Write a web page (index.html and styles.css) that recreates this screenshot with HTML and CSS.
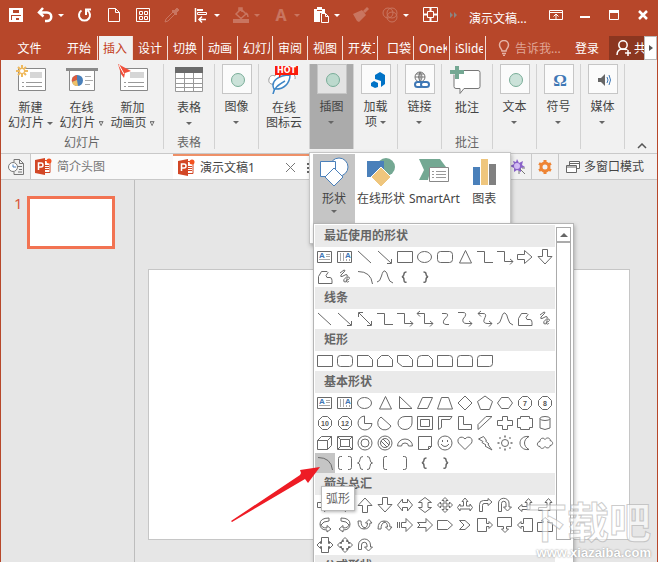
FILE: index.html
```
<!DOCTYPE html>
<html lang="zh-CN">
<head>
  <meta charset="UTF-8">
  <meta name="viewport" content="width=device-width, initial-scale=1.0">
  <title>演示文稿1</title>
  <link rel="stylesheet" href="styles.css">
</head>
<body>
  <div class="window">
    <header class="titlebar">
      <div class="quick">
        <button aria-label="保存"><svg width="20" height="20"><path d="M4 4h12v12H4zM6 4v5h8V4M7 16v-4h7v4" fill="none" stroke="#fff" stroke-width="2"/><path d="M8 13h2v3H8z" fill="#fff"/></svg></button>
        <div class="split">
          <button aria-label="撤消"><svg width="20" height="20"><path d="M8 3L4 7.500l4.500 4M4.500 7.500H12a4 4 0 0 1 0 8.500h-2" fill="none" stroke="#fff" stroke-width="2.500"/></svg></button>
          <button class="drop" aria-label="撤消选项"></button>
        </div>
        <button aria-label="重复"><svg width="20" height="20"><path d="M6.500 5.500A5.500 5.500 0 1 0 12.500 5.500M16 4.500h-5V10" fill="none" stroke="#fff" stroke-width="2"/></svg></button>
        <button aria-label="新建"><svg width="20" height="20"><path d="M4.500 3.500h7l4 4v9h-11zM11.500 3.500v4h4" fill="none" stroke="#fff"/></svg></button>
        <button aria-label="网格"><svg width="20" height="20"><path d="M3.500 3.500h13v13h-13zM6.500 6.500h3v3h-3zM11.500 6.500h3v3h-3zM6.500 11.500h3v3h-3zM11.500 11.500h3v3h-3z" fill="none" stroke="#fff"/></svg></button>
        <button class="off" aria-label="取色器"><svg width="20" height="20"><path d="M3 17l1-3 7-7 2 2-7 7z" fill="none" stroke="#fff"/><path d="M10 6l1-1 1 1 3-3 2 2-3 3 1 1-1 1z" fill="#fff" stroke="#fff"/></svg></button>
        <div class="split">
          <button aria-label="对齐"><svg width="20" height="20"><path d="M4.500 3v14M8 14.500h7M11 11.500l-3 3 3 3" fill="none" stroke="#fff" stroke-width="1.500"/><path d="M6 4h6v2H6z" fill="#fff"/><path d="M6.500 7.500h9v2h-9z" fill="none" stroke="#fff"/></svg></button>
          <button class="drop" aria-label="对齐选项"></button>
        </div>
        <div class="split off">
          <button aria-label="填充"><svg width="20" height="20"><path d="M5 9l5-5 5 5-5 4.500zM8 6V3h3v4M15 8q2 1 2 4" fill="none" stroke="#fff" stroke-width="1.500"/><path d="M2 14h16v4H2z" fill="#fff"/></svg></button>
          <button class="drop" aria-label="填充选项"></button>
        </div>
        <div class="split off">
          <button class="letter">A</button>
          <button class="drop" aria-label="字体颜色选项"></button>
        </div>
        <div class="split">
          <button aria-label="粘贴"><svg width="20" height="20"><path d="M3 4h3V2h5v2h3v4H9v9H3z" fill="#fff"/><path d="M10.500 8.500h4l3 3v6h-7zM14.500 8.500v3h3" fill="#b7472a" stroke="#fff"/><path d="M6 5.500h5" stroke="#b7472a"/></svg></button>
          <button class="drop" aria-label="粘贴选项"></button>
        </div>
        <button class="off" aria-label="格式刷"><svg width="20" height="20"><path d="M2 9l4 7 2 1 7-7-4-5zM12 6l4-4 2 2-4 4z" fill="#fff"/></svg></button>
        <div class="split">
          <button class="off" aria-label="合并形状"><svg width="20" height="20"><g fill="none" stroke="#fff"><circle cx="8" cy="8" r="5"/><circle cx="12" cy="12" r="5"/><circle cx="12" cy="8" r="5"/></g></svg></button>
          <button class="drop" aria-label="合并形状选项"></button>
        </div>
        <button aria-label="适应窗口"><svg width="20" height="20"><path d="M3.500 2.500h14v14h-14zM7.500 6.500h6v6h-6z" fill="none" stroke="#fff"/><path d="M10.500 3v3M10.500 13v3M4 9.500h3M14 9.500h3" stroke="#fff" stroke-width="2"/></svg></button>
        <button class="more" aria-label="更多"><svg width="10" height="20"><path d="M1 7l3 3-3 3zM5 7l3 3-3 3z" fill="#8b8582"/></svg></button>
      </div>
      <div class="doc-title">演示文稿...</div>
      <div class="controls">
        <button aria-label="功能区显示选项"><svg width="14" height="12"><path d="M.5 1.500h13v9H.5zM1 3.500h12M7 10V5M4.500 7.500L7 5l2.500 2.500" fill="none" stroke="#fff"/></svg></button>
        <button aria-label="最小化"><svg width="10" height="10"><path d="M0 6h10v2H0z" fill="#fff"/></svg></button>
        <button aria-label="最大化"><svg width="10" height="10"><path d="M.5.5h9v9h-9z" fill="none" stroke="#fff"/><path d="M0 0h10v3H0z" fill="#fff"/></svg></button>
        <button aria-label="关闭"><svg width="10" height="10"><path d="M1 1l8 8M9 1L1 9" stroke="#fff" stroke-width="2.500"/></svg></button>
      </div>
    </header>

    <nav class="tabs">
      <button class="file">文件</button>
      <button class="tab home">开始</button>
      <button class="tab active">插入</button>
      <button class="tab">设计</button>
      <button class="tab">切换</button>
      <button class="tab">动画</button>
      <button class="tab"><span>幻灯片</span></button>
      <button class="tab">审阅</button>
      <button class="tab">视图</button>
      <button class="tab"><span>开发工具</span></button>
      <button class="tab addin center">口袋</button>
      <button class="tab addin"><span>OneKey</span></button>
      <button class="tab addin"><span>iSlide</span></button>
      <label class="tellme">
        <svg width="12" height="16"><path d="M4 11C4 9 1.500 8 1.500 5a4.500 4.500 0 0 1 9 0C10.500 8 8 9 8 11zM4 13.500h4M5 15.500h2" fill="none" stroke="#e5b3a6" stroke-width="1.500"/></svg>
        <input type="text" placeholder="告诉我..." aria-label="告诉我">
      </label>
      <button class="login">登录</button>
      <button class="share"><svg width="17" height="18"><path d="M2 16c0-4 2-6 6-6s4 1 4 1M13 11v6M10 14h6" fill="none" stroke="#fff" stroke-width="1.500"/><circle cx="8" cy="6" r="4.200" fill="none" stroke="#fff" stroke-width="1.500"/></svg>共享</button>
      <button class="tab-scroll" aria-label="向右滚动"><svg width="4" height="6"><path d="M0 0l4 3-4 3z" fill="#555"/></svg></button>
    </nav>

    <section class="ribbon">
      <div class="group">
        <div class="items">
          <button class="big">
            <svg width="34" height="30"><path d="M4.500 4.500h27v22h-27z" fill="#fff" stroke="#888"/><path d="M16 8h12v6H16z" fill="#d6d6d6"/><path d="M8 18.500h2m2 0h16M8 22.500h2m2 0h16" stroke="#999"/><path d="M8 1v12M2 7h12M4 3l8 8M12 3l-8 8" stroke="#efb95c" stroke-width="2"/><circle cx="8" cy="7" r="2" fill="#fff"/></svg>
            <span>新建<br>幻灯片 <i class="caret"></i></span>
          </button>
          <button class="big">
            <svg width="34" height="30"><path d="M4.500 5.500h25v21h-25z" fill="#fff" stroke="#888"/><path d="M1 4h32v3H1z" fill="#8a8a8a"/><circle cx="12.500" cy="16.500" r="5.500" fill="#4a80ba"/><path d="M12 16V11a5.500 5.500 0 0 0-5 7z" fill="#dc5b3c"/><path d="M12 16l-5 2a5.500 5.500 0 0 0 6 4z" fill="#efc067"/><path d="M20 12.500h6M20 16.500h8M20 20.500h5" stroke="#aaa"/></svg>
            <span>在线<br>幻灯片 <i class="caret hollow"></i></span>
          </button>
          <button class="big">
            <svg width="34" height="30"><path d="M4.500 4.500h27v22h-27z" fill="#fff" stroke="#888"/><path d="M14 8h14v6H14z" fill="#d6d6d6"/><path d="M8 18.500h2m2 0h16M8 22.500h2m2 0h16" stroke="#999"/><path d="M2 0l13 7-6 2-1 5-3-4z" fill="#f2503b"/><path d="M3 1l5 9" stroke="#fff"/></svg>
            <span>新加<br>动画页 <i class="caret hollow"></i></span>
          </button>
        </div>
        <div class="group-name">幻灯片</div>
      </div>
      <div class="group wide">
        <button class="big">
          <svg width="30" height="30"><path d="M1.500 5.500h27v22h-27zM10.500 9v19M19.500 9v19M2 14.500h26M2 19.500h26M2 23.500h26" fill="#fff" stroke="#999"/><path d="M1 3h28v6H1z" fill="#6a6a6a"/></svg>
          <span>表格<br><i class="caret"></i></span>
        </button>
        <div class="group-name">表格</div>
      </div>
      <div class="group">
        <button class="small">
          <svg class="box" width="30" height="30"><circle cx="15" cy="15" r="6.500" fill="#cbe2d9" stroke="#79ad98"/></svg>
          <span>图像<br><i class="caret"></i></span>
        </button>
      </div>
      <div class="group wide">
        <button class="big">
          <svg width="34" height="30"><path d="M8 20c-4 1-7-1-6-5s4-4 6-3c1-5 9-6 12-2 5-3 9 1 8 5" fill="#fff" stroke="#999"/><path d="M6 30c1-6 5-9 12-13M7 25C3 17 12 11 23 11c0 8-6 15-16 14z" fill="#fff" stroke="#3e86c6" stroke-width="1.500"/><path d="M8 2h23v9H14l-2 3v-3H8z" fill="#fa1c0c"/><text x="19.500" y="9" text-anchor="middle" class="hot">HOT</text></svg>
          <span>在线<br>图标云</span>
        </button>
      </div>
      <div class="group pressed">
        <button class="small">
          <svg class="box" width="30" height="30"><circle cx="15" cy="15" r="6.500" fill="#bcd9cd" stroke="#79ad98"/></svg>
          <span>插图<br><i class="caret"></i></span>
        </button>
      </div>
      <div class="group">
        <button class="small">
          <svg class="box" width="30" height="30"><path d="M13 10l5-3 5 3v9l-4 3v-6l-6-2z" fill="#0072c6"/><path d="M9 18l3-2 4 2v4l-3 1-4-2z" fill="#0072c6"/></svg>
          <span>加载<br>项 <i class="caret"></i></span>
        </button>
      </div>
      <div class="group">
        <button class="small">
          <svg class="box" width="30" height="30"><g fill="none" stroke="#777"><circle cx="14" cy="12" r="5"/><path d="M9 12h10M14 7v10M10 9h8M14 7q-3 5 0 10M14 7q4 5 0 10"/></g><g fill="#fff" stroke="#3e77b5" stroke-width="2"><rect x="9" y="17" width="8" height="5" rx="2.500"/><rect x="15" y="17" width="8" height="5" rx="2.500"/></g></svg>
          <span>链接<br><i class="caret"></i></span>
        </button>
      </div>
      <div class="group wide">
        <button class="big">
          <svg width="34" height="30"><path d="M7 6.500h21q2 0 2 2v14q0 2-2 2H14l-4 5v-5H6q-2 0-2-2v-12" fill="#fff" stroke="#777"/><path d="M5 2h4v4h5v4H9v5H5v-5H0V6h5z" fill="#74a893"/></svg>
          <span>批注</span>
        </button>
        <div class="group-name">批注</div>
      </div>
      <div class="group">
        <button class="small">
          <svg class="box" width="30" height="30"><circle cx="15" cy="15" r="6.500" fill="#cbe2d9" stroke="#79ad98"/></svg>
          <span>文本<br><i class="caret"></i></span>
        </button>
      </div>
      <div class="group">
        <button class="small">
          <svg class="box" width="30" height="30"><text x="15" y="21" text-anchor="middle" class="omega">Ω</text></svg>
          <span>符号<br><i class="caret"></i></span>
        </button>
      </div>
      <div class="group">
        <button class="small">
          <svg class="box" width="30" height="30"><path d="M9 13h3l4-4v12l-4-4H9z" fill="#666"/><path d="M18 12q2 3 0 6M20 10q3 5 0 10" fill="none" stroke="#3e77b5"/></svg>
          <span>媒体<br><i class="caret"></i></span>
        </button>
      </div>
      <button class="collapse" aria-label="折叠功能区"><svg width="10" height="6"><path d="M1 5l4-4 4 4" fill="none" stroke="#555" stroke-width="1.500"/></svg></button>
    </section>

    <div class="doc-tabs">
      <button class="history" aria-label="历史"><svg width="16" height="16"><path d="M6 3V.5h5.500l4 4v11H6V13M11.500.5v4h4M10 7.500h4M11 10.500h3M10 13h4" fill="none" stroke="#777"/><circle cx="5" cy="8" r="4.500" fill="#fff" stroke="#777"/><path d="M5 5.500V8h3" fill="none" stroke="#4a7ebb"/></svg></button>
      <button class="doc">
        <svg width="17" height="17"><path d="M9 2.500h6v12H9M10 7.500h4M10 9.500h4M10 11.500h4" fill="#fff" stroke="#d24726"/><path d="M0 2l10-2v17L0 15z" fill="#d24726"/><path d="M3.500 12V5H6q2 0 2 2T6 9H4" fill="none" stroke="#fff" stroke-width="1.500"/><circle cx="14" cy="3" r="2.500" fill="#f4511e"/></svg>
        简介头图
      </button>
      <div class="doc current">
        <svg width="17" height="17"><path d="M9 2.500h6v12H9M10 7.500h4M10 9.500h4M10 11.500h4" fill="#fff" stroke="#d24726"/><path d="M0 2l10-2v17L0 15z" fill="#d24726"/><path d="M3.500 12V5H6q2 0 2 2T6 9H4" fill="none" stroke="#fff" stroke-width="1.500"/><circle cx="14" cy="3" r="2.500" fill="#f4511e"/></svg>
        演示文稿1
        <button class="close" aria-label="关闭标签"><svg width="11" height="11"><path d="M1 1l9 9M10 1l-9 9" stroke="#777"/></svg></button>
        <button aria-label="标签菜单"><svg width="3" height="11"><path d="M0 1h2v2H0zM0 5h2v2H0zM0 9h2v2H0z" fill="#666"/></svg></button>
      </div>
      <button class="tool magic" aria-label="美化"><svg width="16" height="16"><path d="M7 0l2 4 4-2-1 4 3 2-4 1v4l-4-2-3 2V9L0 7l4-2-1-3 3 1z" fill="#8a63c9"/><circle cx="7" cy="7" r="3" fill="#d3bcf5"/><path d="M10 10l5 5M9 12v3M12 9h3" stroke="#777"/></svg></button>
      <button class="tool" aria-label="设置"><svg width="14" height="14"><circle cx="7" cy="7" r="4" fill="none" stroke="#ee8434" stroke-width="3"/><path d="M7 0v2M7 12v2M1 3.500l2 1M11 9.500l2 1M13 3.500l-2 1M3 9.500l-2 1" stroke="#ee8434" stroke-width="3"/></svg></button>
      <button class="mode"><svg width="14" height="12"><path d="M3.500.5h10v7h-10zM3 2.500h11" fill="#fff" stroke="#666"/><path d="M.5 4.500h10v7H.5zM1 6h9" fill="#fff" stroke="#666"/></svg>多窗口模式</button>
    </div>

    <main class="work">
      <aside class="thumbs">
        <span class="num">1</span>
        <button class="thumb" aria-label="幻灯片 1"></button>
      </aside>
      <div class="stage">
        <div class="slide"></div>
      </div>
    </main>

    <div class="flyout">
      <button class="picked">
        <svg width="30" height="30"><circle cx="20" cy="10" r="9" fill="#fff" stroke="#4a80ba"/><path d="M1.500 4.500h15v15h-15z" fill="#fff" stroke="#4a80ba"/><path d="M15 11l9 9-9 9-9-9z" fill="#fff" stroke="#4a80ba"/></svg>
        形状<i class="caret"></i>
      </button>
      <button>
        <svg width="30" height="30"><circle cx="20" cy="10" r="9" fill="#74a893"/><path d="M1 4h17v16H1z" fill="#4a80ba"/><path d="M15 10l10 10-10 10L5 20z" fill="#efc67d" stroke="#fff"/></svg>
        在线形状
      </button>
      <button>
        <svg width="32" height="30"><path d="M1 2h21l6 8-3 5H12l-2 8H1l5-10z" fill="#74a893"/><path d="M11.500 10.500h19v14h-19z" fill="#fff" stroke="#888"/><path d="M14 14.500h2m2 0h10M14 17.500h2m2 0h10M14 20.500h2m2 0h10" stroke="#999"/></svg>
        SmartArt
      </button>
      <button>
        <svg width="26" height="30"><path d="M2 10h7v18H2z" fill="#4a80ba"/><path d="M10 2h7v26h-7z" fill="#efc67d"/><path d="M18 7h7v21h-7z" fill="#808080"/></svg>
        图表
      </button>
    </div>

    <div class="gallery">
      <div class="shapes" id="shapes"></div>
      <div class="scroll">
        <button aria-label="向上滚动"><svg width="8" height="4"><path d="M0 4l4-4 4 4z" fill="#666"/></svg></button>
        <div class="grip"></div>
      </div>
    </div>

    <div class="tooltip">弧形</div>
    <svg class="pointer" width="92" height="58"><path d="M0 55L69 9 70 7 69 4 89 1 77 17 74 13 1 56z" fill="#ee1c25"/></svg>
    <div class="watermark"><b>下载吧</b><span>www.xiazaiba.com</span></div>
  </div>
  <script src="shapes.js"></script>
</body>
</html>
```
FILE: styles.css
```
*, *::before {
  box-sizing: border-box;
}
body {
  margin: 0;
  font-family: "Noto Sans", "Noto Sans CJK SC", sans-serif;
  font-size: 12px;
  line-height: 15px;
  color: #444;
}
button, input {
  font: inherit;
  color: inherit;
  background: none;
  border: none;
  padding: 0;
  margin: 0;
}
svg {
  display: block;
  flex: none;
}
.window {
  position: relative;
  display: flex;
  flex-direction: column;
  height: 100vh;
  overflow: hidden;
  border: solid #b7472a;
  border-width: 0 1px;
  background: #f1f1f1;
}

/* title bar */
.titlebar {
  display: flex;
  height: 36px;
  padding: 5px 0 0 5px;
  background: #b7472a;
  color: #fff;
}
.quick {
  display: flex;
  gap: 9px;
  height: 20px;
}
.split {
  display: flex;
}
.drop {
  width: 11px;
}
.drop::before {
  content: "";
  display: block;
  margin: 0 auto;
  width: 6px;
  border: 3px solid transparent;
  border-top-color: #fff;
  border-bottom: none;
}
.off {
  opacity: 0.25;
}
.letter {
  width: 20px;
  font-size: 16px;
  font-weight: bold;
}
.doc-title {
  margin: 6px 0 0 10px;
  white-space: nowrap;
}
.controls {
  display: flex;
  margin-left: auto;
  height: 20px;
}
.controls button {
  display: flex;
  align-items: center;
  justify-content: center;
  width: 29px;
}

/* ribbon tabs */
.tabs {
  display: flex;
  height: 24px;
  background: #b7472a;
  color: #fff;
}
.file {
  width: 61px;
  padding-right: 4px;
}
.tab {
  flex: none;
  width: 35px;
  padding: 0 2px 0 5px;
  border-right: 1px solid #f3dcd6;
  text-align: left;
  white-space: nowrap;
}
.tab span {
  display: block;
  overflow: hidden;
}
.home {
  width: 36px;
}
.active {
  padding-left: 4px;
  background: #f1f1f1;
  color: #c43e1c;
  border-left: 1px solid #b7472a;
}
.addin {
  width: 36px;
}
.center {
  text-align: right;
}
.tellme {
  display: flex;
  flex: 1;
  align-items: center;
  gap: 5px;
  min-width: 0;
  padding-left: 12px;
}
.tellme input {
  flex: 1;
  min-width: 0;
}
.tellme input::placeholder {
  color: #e0a595;
}
.login {
  margin: 0 10px;
}
.share {
  display: flex;
  align-items: center;
  gap: 2px;
  width: 35px;
  padding-left: 6px;
  overflow: hidden;
  white-space: nowrap;
  background: #8b3620;
}
.tab-scroll {
  display: flex;
  align-items: center;
  justify-content: center;
  width: 13px;
  background: #fff;
  border: 1px solid #bbb;
}

/* ribbon */
.ribbon {
  display: flex;
  height: 93px;
  padding: 4px 0;
}
.group {
  display: flex;
  flex-direction: column;
  flex: none;
  align-items: center;
  min-width: 44px;
  border-right: 1px solid #d2d2d2;
}
.wide {
  min-width: 51px;
}
.items {
  display: flex;
  padding: 0 5px 0 4px;
}
.big, .small {
  display: flex;
  flex-direction: column;
  align-items: center;
  gap: 5px;
}
.big {
  gap: 6px;
  white-space: nowrap;
}
.items .big {
  width: 51px;
}
.box {
  border: 1px solid #c6c6c6;
  background: #fbfbfb;
}
.pressed {
  background: #ababab;
}
.pressed .box {
  background: #e3e3e3;
}
.group-name {
  margin-top: auto;
  line-height: 12px;
  color: #666;
}
.caret {
  display: inline-block;
  width: 6px;
  border: 3px solid transparent;
  border-top-color: #666;
  border-bottom: none;
  vertical-align: middle;
}
.hollow {
  width: 5px;
  height: 5px;
  border: none;
  background: #555;
  clip-path: polygon(0 0, 100% 0, 50% 100%, 0 0, 25% 20%, 50% 70%, 75% 20%, 25% 20%);
}
.hot {
  font: bold 8px "DejaVu Sans", sans-serif;
  fill: #fff;
}
.omega {
  font: bold 17px "Liberation Serif", serif;
  fill: #3e77b5;
}
.collapse {
  align-self: flex-end;
  margin: 0 10px 0 auto;
}

/* document tabs */
.doc-tabs {
  display: flex;
  height: 27px;
  border: solid #c9c9c9;
  border-width: 1px 0;
}
.doc-tabs button {
  display: flex;
  align-items: center;
  justify-content: center;
}
.doc-tabs .history {
  width: 30px;
  border-right: 1px solid #c9c9c9;
}
.doc-tabs .doc {
  display: flex;
  align-items: center;
  justify-content: flex-start;
  gap: 5px;
  width: 142px;
  padding-left: 4px;
  background: #f9f9f9;
  color: #777;
}
.doc-tabs .current {
  width: 137px;
  padding-left: 5px;
  background: #fff;
  color: #444;
  border-top: 2px solid #ee9068;
}
.close {
  margin: 0 6px 0 auto;
}
.doc-tabs .magic {
  margin-left: auto;
}
.tool {
  width: 27px;
  border-right: 1px solid #c9c9c9;
}
.mode {
  gap: 4px;
  width: 98px;
  padding-right: 6px;
  white-space: nowrap;
}

/* work area */
.work {
  display: flex;
  flex: 1;
  min-height: 0;
  background: #e6e6e6;
}
.thumbs {
  display: flex;
  align-items: flex-start;
  gap: 4px;
  width: 134px;
  padding: 16px 19px 0 13px;
  border-right: 1px solid #bdbdbd;
}
.num {
  font-size: 15px;
  color: #d9573a;
}
.thumb {
  flex: 1;
  height: 53px;
  background: #fff;
  border: 3px solid #f27352;
}
.stage {
  flex: 1;
  padding: 89px 27px 22px 13px;
}
.slide {
  height: 100%;
  background: #fff;
  border: 1px solid #c6c6c6;
}

/* illustration flyout */
.flyout {
  position: absolute;
  left: 308px;
  top: 152px;
  display: flex;
  height: 92px;
  padding: 1px 3px;
  background: #fff;
  border: 1px solid #c6c6c6;
  box-shadow: 1px 2px 4px rgba(0, 0, 0, 0.25);
}
.flyout button {
  display: flex;
  flex-direction: column;
  align-items: center;
  gap: 4px;
  padding: 3px 2px 0;
  white-space: nowrap;
}
.flyout button:last-child {
  width: 45px;
}
.flyout .picked {
  width: 42px;
  background: #c5c5c5;
}

/* shapes gallery */
.gallery {
  position: absolute;
  left: 312px;
  top: 223px;
  bottom: -20px;
  display: flex;
  padding: 1px;
  background: #fff;
  border: 1px solid #b5b5b5;
  box-shadow: 1px 2px 4px rgba(0, 0, 0, 0.25);
}
.shapes h2 {
  margin: 0;
  height: 22px;
  padding-left: 9px;
  font-size: 12px;
  line-height: 22px;
  color: #666;
  background: #eaeaea;
}
.cells {
  display: grid;
  grid-template-columns: repeat(12, 20px);
}
.cells button {
  height: 20px;
}
.cells svg {
  fill: none;
  stroke: #696969;
}
.cells text {
  font: bold 7px "Liberation Sans", sans-serif;
  text-anchor: middle;
  fill: #555;
  stroke: none;
}
.cells .blue {
  font-size: 8px;
  fill: #3e77b5;
}
.cells .thin {
  stroke: #a8a8a8;
}
.cells .hover {
  background: #c5c5c5;
}
.scroll {
  display: flex;
  flex-direction: column;
  width: 15px;
  margin: 2px 1px 40px;
}
.scroll button {
  display: flex;
  align-items: center;
  justify-content: center;
  height: 15px;
  border: 1px solid #ababab;
}
.grip {
  flex: 1;
  border: 1px solid #ababab;
}

/* things floating above the page */
.tooltip {
  position: absolute;
  left: 320px;
  top: 486px;
  padding: 4px;
  background: #fff;
  border: 1px solid #bbb;
  box-shadow: 1px 1px 3px rgba(0, 0, 0, 0.3);
  color: #666;
}
.pointer {
  position: absolute;
  left: 230px;
  top: 466px;
}
.watermark {
  position: absolute;
  right: 6px;
  bottom: 1px;
  display: flex;
  flex-direction: column;
  align-items: flex-end;
  color: rgba(255, 255, 255, 0.6);
  -webkit-text-stroke: 1px rgba(170, 170, 170, 0.6);
}
.watermark b {
  font-size: 42px;
  line-height: 46px;
}
.watermark span {
  font: bold 13px/16px "Liberation Sans", sans-serif;
  color: #fff;
  -webkit-text-stroke: 0;
  text-shadow: 0 0 2px #888;
}
```
FILE: shapes.js
```
// every shape is drawn in a 20x20 box
const octagon = '<path d="M7.500 3.500h5l4 4v5l-4 4h-5l-4-4v-5z"/>';

const SHAPES = {
  textbox: '<path d="M2.500 4.500h14v11h-14z"/><path class="thin" d="M11 7.500h4M11 9.500h4M4 12.500h11"/><text class="blue" x="7" y="11">A</text>',
  vtextbox: '<path d="M2.500 4.500h14v11h-14z"/><path class="thin" d="M5.500 6v8M8.500 6v8M11.500 12v2M14.500 12v2"/><text class="blue" x="13" y="11">A</text>',
  line: '<path d="M3 4l13 12"/>',
  arrow: '<path d="M3 4l13 12M16.500 12v4.500H12"/>',
  doubleArrow: '<path d="M4 4l12 12M16.500 12v4.500H12M3.500 8V3.500H8"/>',
  rect: '<path d="M2.500 4.500h15v11h-15z"/>',
  oval: '<ellipse cx="9.500" cy="10" rx="7" ry="5.500"/>',
  roundRect: '<rect x="2.500" y="4.500" width="15" height="11" rx="3"/>',
  triangle: '<path d="M10.500 3.500l6 12.500h-12z"/>',
  elbow: '<path d="M2 4.500h7.500v11H18"/>',
  elbowArrow: '<path d="M2 4.500h7.500v10H18M15 12l3 2.500-3 3"/>',
  elbowDouble: '<path d="M2 4.500h7.500v10H18M15 12l3 2.500-3 3M5 2L2 4.500l3 3"/>',
  right: '<path d="M2.500 7.500h7v-4l7.500 6.500-7.500 6.500v-4h-7z"/>',
  left: '<path d="M17.500 7.500h-7v-4L3 10l7.500 6.500v-4h7z"/>',
  down: '<path d="M7.500 2.500h5v7h4.500L10 17 3 9.500h4.500z"/>',
  up: '<path d="M7.500 17.500h5v-7h4.500L10 3l-7 7.500h4.500z"/>',
  freeform: '<path d="M3.500 16.500v-7l3-5H12l1 1-2 3 1 2h3q2 0 2 3v3z"/>',
  scribble: '<path d="M5 6l4-3q2 0 0 2L6 8q-1 2 1 1.500l4-2q2 0 1 2l-3 3q-1 2.500 1 2.500c3 0 1-5 3-5 3 0 1 3-1 3s0 4 2 1"/>',
  arc: '<path d="M3 4.500q13 0 14.500 12.500"/>',
  curve: '<path d="M2 15q3 0 4.500-6T10 4t3 6 5 6"/>',
  lbrace: '<path stroke-width="1.500" d="M11.500 5Q9 5 9 7T7 10q2 0 2 3t2.500 2"/>',
  rbrace: '<path stroke-width="1.500" d="M8.500 5Q11 5 11 7t2 3q-2 0-2 3t-2.500 2"/>',
  curvedLine: '<path d="M7 4.500h3q4 0 2 3L9 11q-2 4 2 4.500h3"/>',
  curvedArrow: '<path d="M3 3.500h5q4 0 2 4L8 10q-1 4 3 4.500h6M14 12l3 2.500-3 3"/>',
  curvedDouble: '<path d="M3 4.500h5q4 0 2 4L9 11q-1 3 3 3.500h5M14 12l3 2.500-3 3M6 2L3 4.500l3 3"/>',
  snip1: '<path d="M2.500 4.500h11l4 4v7h-15z"/>',
  snipTop: '<path d="M6.500 4.500h7l4 4v7h-15v-7z"/>',
  snipDiag: '<path d="M2.500 4.500h11l4 4v7h-10l-5-4z"/>',
  snipRound: '<path d="M6.500 4.500h7l4 4v7h-15v-7q0-4 4-4z"/>',
  round1: '<path d="M2.500 4.500h12q3 0 3 3v8h-15z"/>',
  roundTop: '<path d="M5.500 4.500h9q3 0 3 3v8h-15v-8q0-3 3-3z"/>',
  roundDiag: '<path d="M5.500 4.500h12v8q0 3-3 3h-12v-8q0-3 3-3z"/>',
  rtTriangle: '<path d="M4.500 3.500L17 15.500H4.500z"/>',
  parallelogram: '<path d="M7.500 4.500h10l-5 11h-10z"/>',
  trapezoid: '<path d="M6.500 4.500h7l4 11.500h-15z"/>',
  diamond: '<path d="M10 3l7 7-7 7-7-7z"/>',
  pentagon: '<path d="M10 3l7.500 5.500-3 8h-9l-3-8z"/>',
  hexagon: '<path d="M6.500 4.500h7l4 5.500-4 5.500h-7L2.500 10z"/>',
  seven: octagon + '<text x="10" y="12.500">7</text>',
  eight: octagon + '<text x="10" y="12.500">8</text>',
  ten: octagon + '<text x="10" y="12.500">10</text>',
  twelve: octagon + '<text x="10" y="12.500">12</text>',
  pie: '<path d="M9.500 3a7 7 0 1 0 7.500 7.500H9.500z"/>',
  chord: '<path d="M6 4a7 7 0 1 0 10 9z"/>',
  teardrop: '<path d="M10 3.500h7V10a7 6.500 0 1 1-7-6.500z"/>',
  frame: '<path d="M2.500 3.500h15v13h-15zM5.500 6.500h9v7h-9z"/>',
  halfFrame: '<path d="M3.500 3.500H17l-2 3H6.500v8l-3 2z"/>',
  corner: '<path d="M3.500 3.500h5v8h8v5h-13z"/>',
  stripe: '<path d="M3 16.500v-5l8-8h6z"/>',
  plus: '<path d="M7.500 3.500h5v4h5v5h-5v4h-5v-4h-5v-5h5z"/>',
  plaque: '<path d="M5.500 3.500h9v2h3v9h-3v2h-9v-2h-3v-9h3z"/>',
  can: '<ellipse cx="10" cy="5.500" rx="5" ry="2"/><path d="M5 5.500v9.500q5 3 10 0V5.500"/>',
  cube: '<path d="M2.500 7.500h10v9h-10zM2.500 7.500l4-4h10v9l-4 4M12.500 7.500l4-4"/>',
  bevel: '<path d="M2.500 3.500h15v13h-15zM5.500 6.500h9v7h-9zM3 4l3 3M17 4l-3 3M3 16l3-3M17 16l-3-3"/>',
  donut: '<circle cx="10" cy="10" r="7"/><circle cx="10" cy="10" r="4"/>',
  noSymbol: '<circle cx="10" cy="10" r="7"/><circle cx="10" cy="10" r="4.500"/><path d="M6 8l6 6M8 6l6 6"/>',
  blockArc: '<path d="M2.500 13a7.500 7 0 0 1 15 0h-4a3.500 3 0 0 0-7 0z"/>',
  folded: '<path d="M3.500 3.500h13v10l-3 3h-10zM13.500 16.500v-3h3"/>',
  smiley: '<circle cx="10" cy="10" r="7"/><path d="M6 11q4 5 8 0M7.500 7v2M12.500 7v2"/>',
  heart: '<path d="M10 16.500L3.500 10C1 5 7 2 10 6c3-4 9-1 6.500 4z"/>',
  lightning: '<path d="M3.500 6l5-2.500 3 4-1 .5 3.500 3-1 .5 4 5.500-7-4 1-1-4-2.500 1-1z"/>',
  sun: '<circle cx="10" cy="10" r="3.500"/><path d="M10 2.500v2M10 15.500v2M2.500 10h2M15.500 10h2M4.500 4.500l1 1M14.500 14.500l1 1M15.500 4.500l-1 1M5.500 14.500l-1 1" stroke-width="1.500"/>',
  moon: '<path d="M14 3.500c-6 3-6 10 0 13C2 18 2 2 14 3.500z"/>',
  cloud: '<path d="M5 13.500c-4 0-3-5 0-5 0-4 4-4 5-2 2-3 6-1 5 1 4 1 3 5 0 5 0 3-4 3-5 1-2 3-5 2-5 0z"/>',
  brackets: '<path d="M7 3.500H5.500q-2 0-2 2v9q0 2 2 2H7M13 3.500h1.500q2 0 2 2v9q0 2-2 2H13"/>',
  braces: '<path d="M8 3.500q-3 0-3 3T2.500 10q2.500 0 2.500 3.500t3 3M12 3.500q3 0 3 3t2.500 3.500q-2.500 0-2.500 3.500t-3 3"/>',
  lbracket: '<path d="M12 3.500h-1.500q-2 0-2 2v9q0 2 2 2H12"/>',
  rbracket: '<path d="M8 3.500h1.500q2 0 2 2v9q0 2-2 2H8"/>',
  leftRight: '<path d="M2.500 10l5-6v3.500h5V4l5 6-5 6v-3.500h-5V16z"/>',
  upDown: '<path d="M10 2.500l6.500 5H13v5h3.500l-6.500 5-6.500-5H7v-5H3.500z"/>',
  quad: '<path d="M10 2.500l3 3h-2v3.500h3.500V7l3 3-3 3v-2H11v3.500h2l-3 3-3-3h2V11H5.500v2l-3-3 3-3v2H9V5.500H7z"/>',
  leftRightUp: '<path d="M10 3l3 3.500h-1.500V11H15V9l2.500 3.500L15 16v-2H5v2l-2.500-3.500L5 9v2h3.500V6.500H7z"/>',
  bent: '<path d="M4.500 16.500v-7q0-4 4-4H13v-2L17 7l-4 3.500v-2H9q-1.500 0-1.500 2v6z"/>',
  uturn: '<path d="M3.500 16.500V8a5 4.500 0 0 1 10.500 0v4h2.500l-4 4-4-4H11V8.500a2 2 0 0 0-4.500 0v8z"/>',
  leftUp: '<path d="M13.500 3.500l3.500 4h-2v7H7v2L3 13l4-3.500v2h5v-4h-2z"/>',
  bentUp: '<path d="M13.500 3.500l3.500 4h-2v8H3.500v-3H12v-5h-2z"/>',
  curveRight: '<path d="M14 3q-9 0-9 6t7 6v2l4-3-4-3.500V13q-6 0-6-4M14 3v3q-6 0-8 4"/>',
  curveLeft: '<path d="M6 3q9 0 9 6t-7 6v2l-4-3 4-3.500V13q6 0 6-4M6 3v3q6 0 8 4"/>',
  curveUp: '<path d="M3 6q0 8 6 8t6-6h2l-3-3.500L10.500 8h2q0 5-4 5M3 6h3q0 6 4 7"/>',
  curveDown: '<path d="M3 14q0-8 6-8t6 6h2l-3 3.500L10.500 12h2q0-5-4-5M3 14h3q0-6 4-7"/>',
  striped: '<path d="M2.500 7v6M4.500 7v6M6.500 7.500H11v-4l6.500 6.500-6.500 6.500v-4H6.500z"/>',
  notched: '<path d="M2.500 7.500H11v-4l6.500 6.500-6.500 6.500v-4H2.500L5 10z"/>',
  homePlate: '<path d="M2.500 5.500h10L17.500 10l-5 4.500h-10z"/>',
  chevron: '<path d="M4.500 5.500H10l5 4.500-5 4.500H4.500L9 10z"/>',
  rightCall: '<path d="M2.500 3.500h9v5H14v-2l3.500 3.500-3.500 3.500v-2h-2.500v5h-9z"/>',
  downCall: '<path d="M2.500 2.500h14v9h-5V14h2L10 17.500 6.500 14h2v-2.500h-6z"/>',
  leftCall: '<path d="M17.500 3.500h-9v5H6v-2L2.500 10 6 13.500v-2h2.500v5h9z"/>',
  upCall: '<path d="M2.500 16.500h15v-9h-5V6h2L10 2.500 6.500 6h2v1.500h-6z"/>',
  leftRightCall: '<path d="M6.500 2.500h7v6h1v-2L18 10l-3.500 3.500v-2h-1v6h-7v-6h-1v2L2 10l3.500-3.500v2h1z"/>',
  quadCall: '<path d="M10 2.500l3 3h-1.500v1h2v2h1V7l3 3-3 3v-1.500h-1v2h-2v1H13l-3 3-3-3h1.500v-1h-2v-2h-1V13l-3-3 3-3v1.500h1v-2h2v-1H7z"/>',
  circular: '<path d="M3.500 14.500V10a6 6 0 0 1 12 0v2h2l-4 4-4-4h2.500v-2a2.500 2.500 0 0 0-5.500 0v4.500z"/>'
};

const GROUPS = [
  ['最近使用的形状', 'textbox vtextbox line arrow rect oval roundRect triangle elbow elbowArrow right down freeform scribble arc curve lbrace rbrace'],
  ['线条', 'line arrow doubleArrow elbow elbowArrow elbowDouble curvedLine curvedArrow curvedDouble curve freeform scribble'],
  ['矩形', 'rect roundRect snip1 snipTop snipDiag snipRound round1 roundTop roundDiag'],
  ['基本形状', 'textbox vtextbox oval triangle rtTriangle parallelogram trapezoid diamond pentagon hexagon seven eight ' +
    'ten twelve pie chord teardrop frame halfFrame corner stripe plus plaque can ' +
    'cube bevel donut noSymbol blockArc folded smiley heart lightning sun moon cloud ' +
    'arc brackets braces lbracket rbracket lbrace rbrace'],
  ['箭头总汇', 'right left up down leftRight upDown quad leftRightUp bent uturn leftUp bentUp ' +
    'curveRight curveLeft curveUp curveDown striped notched homePlate chevron rightCall downCall leftCall upCall ' +
    'leftRightCall quadCall circular'],
  ['公式形状', '']
];

let html = '';
for (const [title, names] of GROUPS) {
  html += `<h2>${title}</h2><div class="cells">`;
  for (const name of names.split(' ').filter(Boolean)) {
    const hover = title === '基本形状' && name === 'arc' ? ' class="hover"' : '';
    html += `<button${hover} aria-label="${name}"><svg width="20" height="20">${SHAPES[name]}</svg></button>`;
  }
  html += '</div>';
}
document.getElementById('shapes').innerHTML = html;
```
